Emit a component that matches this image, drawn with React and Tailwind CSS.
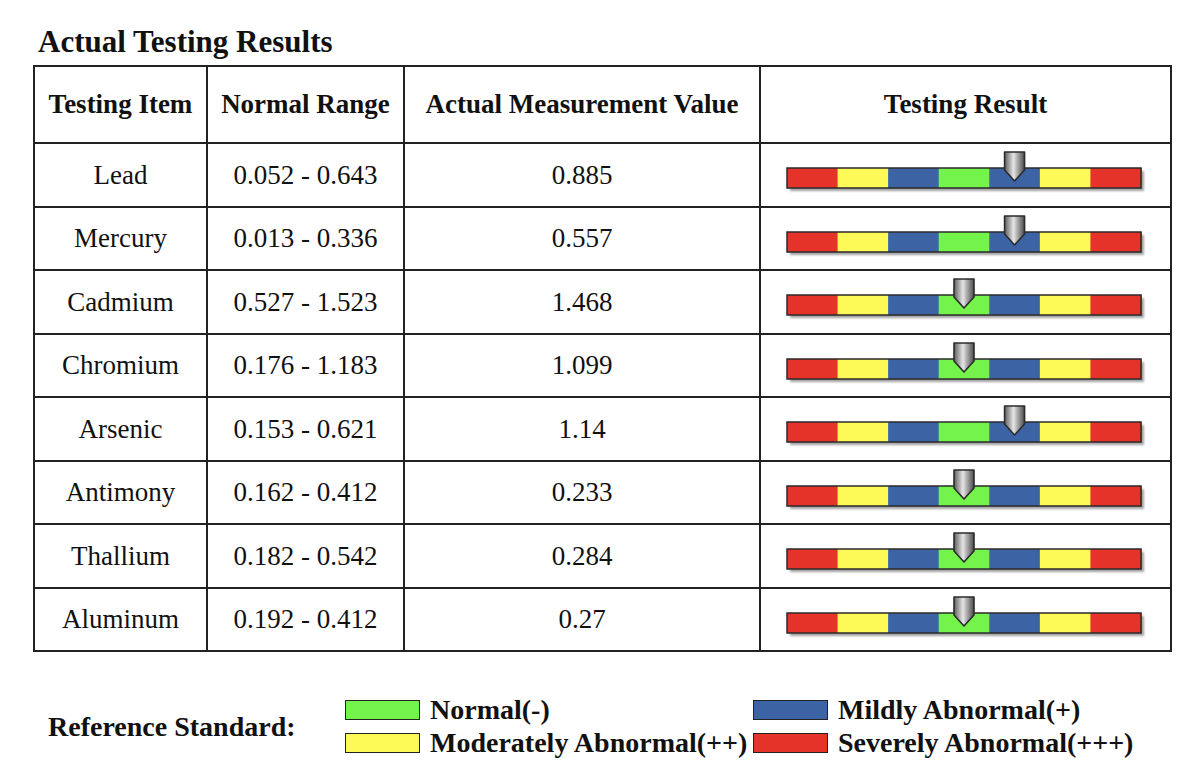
import React from 'react'

const rows = [
  { item: 'Lead', range: '0.052 - 0.643', value: '0.885', level: 4 },
  { item: 'Mercury', range: '0.013 - 0.336', value: '0.557', level: 4 },
  { item: 'Cadmium', range: '0.527 - 1.523', value: '1.468', level: 3 },
  { item: 'Chromium', range: '0.176 - 1.183', value: '1.099', level: 3 },
  { item: 'Arsenic', range: '0.153 - 0.621', value: '1.14', level: 4 },
  { item: 'Antimony', range: '0.162 - 0.412', value: '0.233', level: 3 },
  { item: 'Thallium', range: '0.182 - 0.542', value: '0.284', level: 3 },
  { item: 'Aluminum', range: '0.192 - 0.412', value: '0.27', level: 3 },
]

const RED = '#e5332a'
const YELLOW = '#fdf956'
const BLUE = '#3c64a5'
const GREEN = '#74f34b'
const segs = [RED, YELLOW, BLUE, GREEN, BLUE, YELLOW, RED]

function ScaleBar({ level, id }) {
  const x0 = 2
  const w = 354 / 7
  const px = x0 + w * level + w / 2
  return (
    <svg width="362" height="42" viewBox="0 0 362 42" className="block">
      <defs>
        <filter id={`sh${id}`} x="-5%" y="-50%" width="110%" height="200%">
          <feGaussianBlur stdDeviation="1.2" />
        </filter>
        <linearGradient id={`pg${id}`} x1="0" x2="1" y1="0" y2="0">
          <stop offset="0" stopColor="#5e5e5e" />
          <stop offset="0.45" stopColor="#e6e6e6" />
          <stop offset="0.6" stopColor="#b8b8b8" />
          <stop offset="1" stopColor="#4a4a4a" />
        </linearGradient>
      </defs>
      <rect x={x0 + 3} y="20" width="354" height="20" fill="#555" opacity="0.55" filter={`url(#sh${id})`} />
      {segs.map((c, i) => (
        <rect key={i} x={x0 + w * i} y="17" width={w + 0.5} height="20" fill={c} />
      ))}
      <rect x={x0} y="17" width="354" height="20" fill="none" stroke="#2a2a2a" strokeWidth="1.5" />
      <path
        d={`M${px - 10} 1 h20 v18 l-10 11 l-10 -11 z`}
        fill={`url(#pg${id})`}
        stroke="#2b2b2b"
        strokeWidth="1.6"
        strokeLinejoin="round"
      />
    </svg>
  )
}

function Swatch({ color }) {
  return <span className="inline-block w-[75px] h-[20px] border-[1.5px] border-[#222]" style={{ background: color }} />
}

export default function App() {
  return (
    <div className="w-[1200px] h-[782px] bg-white text-[#111] font-['Liberation_Serif',serif] overflow-hidden">
      <h1 className="pl-[38px] pt-[24px] text-[31px] leading-[36px] font-bold h-[65px]">Actual Testing Results</h1>
      <table className="ml-[33px] w-[1137px] border-collapse border-2 border-[#222] table-fixed">
        <colgroup>
          <col className="w-[173px]" />
          <col className="w-[197px]" />
          <col className="w-[356px]" />
          <col className="w-[411px]" />
        </colgroup>
        <thead>
          <tr className="h-[77px] text-[27px] font-bold">
            <th className="border-2 border-[#222] text-center">Testing Item</th>
            <th className="border-2 border-[#222] text-center">Normal Range</th>
            <th className="border-2 border-[#222] text-center">Actual Measurement Value</th>
            <th className="border-2 border-[#222] text-center">Testing Result</th>
          </tr>
        </thead>
        <tbody>
          {rows.map((r, i) => (
            <tr key={r.item} className="h-[63.5px] text-[27px]">
              <td className="border-2 border-[#222] text-center">{r.item}</td>
              <td className="border-2 border-[#222] text-center">{r.range}</td>
              <td className="border-2 border-[#222] text-center">{r.value}</td>
              <td className="border-2 border-[#222]">
                <div className="flex justify-center pb-[5px]">
                  <ScaleBar level={r.level} id={i} />
                </div>
              </td>
            </tr>
          ))}
        </tbody>
      </table>
      <div className="flex items-center pl-[48px] pt-[41px] text-[28px] font-bold leading-[33px]">
        <div className="w-[297px]">Reference Standard:</div>
        <div className="grid grid-cols-[408px_auto]">
          <div className="flex items-center gap-[10px]">
            <Swatch color={GREEN} />
            <span>Normal(-)</span>
          </div>
          <div className="flex items-center gap-[10px]">
            <Swatch color={BLUE} />
            <span>Mildly Abnormal(+)</span>
          </div>
          <div className="flex items-center gap-[10px]">
            <Swatch color={YELLOW} />
            <span>Moderately Abnormal(++)</span>
          </div>
          <div className="flex items-center gap-[10px]">
            <Swatch color={RED} />
            <span>Severely Abnormal(+++)</span>
          </div>
        </div>
      </div>
    </div>
  )
}
